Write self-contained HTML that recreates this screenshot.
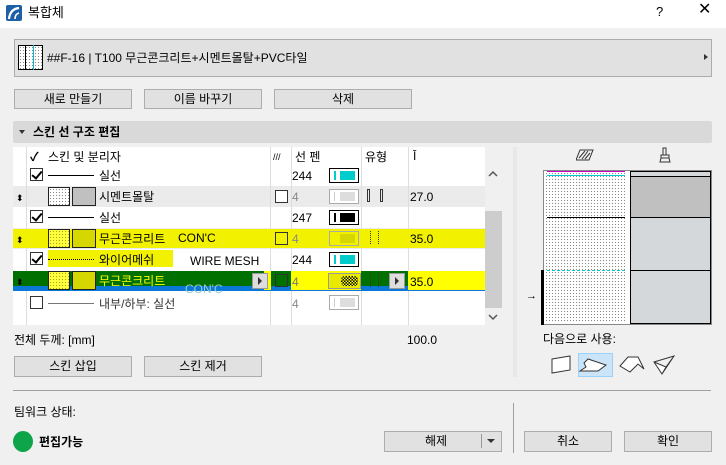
<!DOCTYPE html>
<html><head><meta charset="utf-8"><style>
*{margin:0;padding:0;box-sizing:border-box}
body{width:726px;height:465px;background:#f0f0f0;font-family:"Liberation Sans","Noto Sans CJK KR",sans-serif;font-size:12px;color:#000;position:relative;overflow:hidden}
.a{position:absolute}
.btn{position:absolute;background:#e1e1e1;border:1px solid #adadad;text-align:center;line-height:18px;font-size:12px}
.t{position:absolute;white-space:nowrap;font-size:12px;line-height:14px}
.cb{position:absolute;width:13px;height:13px;border:1px solid #333;background:#fff}
.ck:after{content:"";position:absolute;left:3px;top:0px;width:4px;height:8px;border:solid #000;border-width:0 2px 2px 0;transform:rotate(40deg)}
.dot{background-color:#fff;background-image:radial-gradient(#888 0.6px,transparent 0.8px);background-size:3px 3px}
.dy{background-color:#ffff40;background-image:radial-gradient(#aa0 0.6px,transparent 0.8px);background-size:3px 3px}
.g{color:#888}
</style></head><body>
<!-- title -->
<div class="a" style="left:0;top:0;width:726px;height:28px;background:#fff"></div>
<svg class="a" style="left:6px;top:5px" width="16" height="16"><rect width="16" height="16" rx="2" fill="#1f5fa8"/><path d="M3 14 Q4 4 13 3" stroke="#fff" stroke-width="2.2" fill="none"/><path d="M9 14 Q9 9 13 8" stroke="#fff" stroke-width="1.6" fill="none"/></svg>
<div class="t" style="left:28px;top:6px;font-size:13px">복합체</div>
<div class="t" style="left:656px;top:5px;font-size:13px">?</div>
<div class="t" style="left:698px;top:3px;font-size:16px">✕</div>
<!-- combo -->
<div class="a" style="left:14px;top:39px;width:698px;height:38px;background:#e1e1e1;border:1px solid #adadad"></div>
<div class="a dot" style="left:18px;top:45px;width:25px;height:25px;border:1px solid #000"></div>
<div class="a" style="left:25px;top:45px;width:1px;height:25px;background:#000"></div>
<div class="a" style="left:33px;top:45px;width:1px;height:25px;background:#00bcd4"></div>
<div class="t" style="left:47px;top:51px">##F-16 | T100 무근콘크리트+시멘트몰탈+PVC타일</div>
<div class="a" style="left:704px;top:54px;border-left:4px solid #333;border-top:3px solid transparent;border-bottom:3px solid transparent"></div>
<div class="btn" style="left:14px;top:89px;width:118px;height:20px">새로 만들기</div>
<div class="btn" style="left:144px;top:89px;width:118px;height:20px">이름 바꾸기</div>
<div class="btn" style="left:274px;top:89px;width:138px;height:20px">삭제</div>
<div class="a" style="left:13px;top:121px;width:699px;height:22px;background:#d9d9d9;border-radius:2px"></div>
<div class="a" style="left:19px;top:130px;border-top:4px solid #333;border-left:3px solid transparent;border-right:3px solid transparent"></div>
<div class="t" style="left:33px;top:125px;font-weight:bold">스킨 선 구조 편집</div>
<!-- table -->
<div class="a" style="left:13px;top:147px;width:472px;height:178px;background:#fff"></div>
<div class="a" style="left:13px;top:186px;width:472px;height:21px;background:#ebebeb"></div>
<div class="a" style="left:13px;top:228px;width:472px;height:21px;background:#ebebeb"></div>
<div class="a" style="left:26px;top:147px;width:1px;height:178px;background:#ddd"></div>
<div class="a" style="left:270px;top:147px;width:1px;height:178px;background:#ddd"></div>
<div class="a" style="left:291px;top:147px;width:1px;height:178px;background:#ddd"></div>
<div class="a" style="left:361px;top:147px;width:1px;height:178px;background:#ddd"></div>
<div class="a" style="left:408px;top:147px;width:1px;height:178px;background:#ddd"></div>
<div class="a" style="left:485px;top:147px;width:17px;height:178px;background:#f0f0f0"></div>
<div class="a" style="left:485px;top:211px;width:17px;height:97px;background:#cdcdcd"></div>
<svg class="a" style="left:487px;top:170px" width="12" height="8"><path d="M2 6l4-4 4 4" stroke="#555" stroke-width="1.5" fill="none"/></svg>
<svg class="a" style="left:487px;top:313px" width="12" height="8"><path d="M2 2l4 4 4-4" stroke="#555" stroke-width="1.5" fill="none"/></svg>
<!-- header -->
<div class="t" style="left:30px;top:150px;font-weight:bold">✓</div>
<div class="t" style="left:48px;top:150px">스킨 및 분리자</div>
<div class="t" style="left:273px;top:150px;font-size:9px">///</div>
<div class="t" style="left:295px;top:150px">선 펜</div>
<div class="t" style="left:365px;top:150px">유형</div>
<div class="t" style="left:413px;top:149px">Ī</div>
<!-- rows -->
<div class="cb ck" style="left:30px;top:168px"></div>
<div class="a" style="left:48px;top:175px;width:46px;height:1px;background:#000"></div>
<div class="t" style="left:99px;top:169px">실선</div>
<div class="t" style="left:292px;top:169px">244</div>
<div class="a" style="left:329px;top:168px;width:30px;height:15px;border:1.5px solid #000;background:#fff"><div class="a" style="left:4px;top:2px;width:1.5px;height:9px;background:#0cc"></div><div class="a" style="left:10px;top:2px;width:15px;height:9px;background:#0cc"></div></div>

<div class="t" style="left:16px;top:191px;font-size:9px">⬍</div>
<div class="a dot" style="left:48px;top:187px;width:22px;height:19px;border:1px solid #222"></div>
<div class="a" style="left:72px;top:187px;width:24px;height:19px;border:1px solid #222;background:#c0c0c0"></div>
<div class="t" style="left:99px;top:190px">시멘트몰탈</div>
<div class="cb" style="left:275px;top:190px"></div>
<div class="t g" style="left:292px;top:190px">4</div>
<div class="a" style="left:329px;top:189px;width:30px;height:15px;border:1px solid #aaa;background:#fff"><div class="a" style="left:4px;top:2px;width:1px;height:9px;background:#ccc"></div><div class="a" style="left:10px;top:2px;width:15px;height:9px;background:#ddd"></div></div>
<div class="a" style="left:367px;top:189px;width:3px;height:13px;border:1px solid #333"></div>
<div class="a" style="left:380px;top:189px;width:3px;height:13px;border:1px solid #333"></div>
<div class="t" style="left:410px;top:190px">27.0</div>

<div class="cb ck" style="left:30px;top:210px"></div>
<div class="a" style="left:48px;top:217px;width:46px;height:1px;background:#000"></div>
<div class="t" style="left:99px;top:211px">실선</div>
<div class="t" style="left:292px;top:211px">247</div>
<div class="a" style="left:329px;top:210px;width:30px;height:15px;border:1.5px solid #000;background:#fff"><div class="a" style="left:4px;top:2px;width:2px;height:9px;background:#000"></div><div class="a" style="left:10px;top:2px;width:15px;height:9px;background:#000"></div></div>

<!-- yellow highlight row -->
<div class="a" style="left:13px;top:229px;width:472px;height:19px;background:#f2f200"></div>
<div class="t" style="left:16px;top:233px;font-size:9px">⬍</div>
<div class="a dy" style="left:48px;top:229px;width:22px;height:19px;border:1px solid #222"></div>
<div class="a" style="left:72px;top:229px;width:24px;height:19px;border:1px solid #222;background:#d6d600"></div>
<div class="t" style="left:99px;top:232px">무근콘크리트</div>
<div class="t" style="left:178px;top:231px;font-size:12px">CON'C</div>
<div class="cb" style="left:275px;top:232px;background:transparent"></div>
<div class="t g" style="left:292px;top:232px">4</div>
<div class="a" style="left:329px;top:231px;width:30px;height:15px;border:1px solid #aaa"><div class="a" style="left:10px;top:2px;width:15px;height:9px;background:#d6d600"></div></div>
<div class="a" style="left:370px;top:231px;width:1px;height:13px;border-left:1px dotted #333"></div>
<div class="a" style="left:378px;top:231px;width:1px;height:13px;border-left:1px dotted #333"></div>
<div class="t" style="left:410px;top:232px">35.0</div>

<div class="cb ck" style="left:30px;top:252px"></div>
<div class="a" style="left:48px;top:250px;width:125px;height:17px;background:#f2f200"></div>
<div class="a" style="left:48px;top:259px;width:46px;height:1px;border-top:1px dotted #000"></div>
<div class="t" style="left:99px;top:253px">와이어메쉬</div>
<div class="t" style="left:190px;top:254px;font-size:12px">WIRE  MESH</div>
<div class="t" style="left:292px;top:253px">244</div>
<div class="a" style="left:329px;top:252px;width:30px;height:15px;border:1.5px solid #000;background:#fff"><div class="a" style="left:4px;top:2px;width:1.5px;height:9px;background:#0cc"></div><div class="a" style="left:10px;top:2px;width:15px;height:9px;background:#0cc"></div></div>

<!-- selected row -->
<div class="a" style="left:13px;top:271px;width:472px;height:20px;background:#007000"></div>
<div class="a" style="left:13px;top:286px;width:472px;height:5px;background:#0a78d7"></div>
<div class="a" style="left:264px;top:271px;width:221px;height:19px;background:#ffff00"></div>
<div class="a" style="left:271px;top:271px;width:20px;height:20px;background:#007000"></div>
<div class="a" style="left:271px;top:286px;width:20px;height:5px;background:#0a78d7"></div>
<div class="a" style="left:361px;top:271px;width:47px;height:20px;background:#007000"></div>
<div class="a" style="left:361px;top:286px;width:47px;height:5px;background:#0a78d7"></div>
<div class="t" style="left:16px;top:275px;font-size:9px">⬍</div>
<div class="a dy" style="left:48px;top:271px;width:22px;height:19px;border:1px solid #222"></div>
<div class="a" style="left:72px;top:271px;width:24px;height:19px;border:1px solid #222;background:#d6d600"></div>
<div class="t" style="left:99px;top:274px;color:#ff0">무근콘크리트</div>
<div class="t" style="left:185px;top:282px;font-size:12px;color:#9cc">CON'C</div>
<div class="a" style="left:252px;top:273px;width:16px;height:16px;background:#ddd;border:1px solid #999"></div>
<div class="a" style="left:258px;top:277px;border-left:4px solid #333;border-top:4px solid transparent;border-bottom:4px solid transparent"></div>
<div class="cb" style="left:275px;top:274px;background:transparent"></div>
<div class="t" style="left:292px;top:275px;color:#777">4</div>
<div class="a" style="left:328px;top:273px;width:33px;height:16px;background:#e8e800;border:1px solid #999"><div class="a" style="left:12px;top:2px;width:17px;height:10px;background:repeating-conic-gradient(#000 0 25%,#ff0 0 50%) 0 0/3px 3px;border-radius:4px"></div></div>
<div class="a" style="left:370px;top:273px;width:1px;height:14px;border-left:1px dotted #333"></div>
<div class="a" style="left:378px;top:273px;width:1px;height:14px;border-left:1px dotted #333"></div>
<div class="a" style="left:389px;top:273px;width:16px;height:16px;background:#ddd;border:1px solid #999"></div>
<div class="a" style="left:395px;top:277px;border-left:4px solid #333;border-top:4px solid transparent;border-bottom:4px solid transparent"></div>
<div class="t" style="left:410px;top:275px">35.0</div>

<div class="cb" style="left:30px;top:296px"></div>
<div class="a" style="left:48px;top:303px;width:46px;height:1px;background:#777"></div>
<div class="t" style="left:99px;top:297px;color:#333">내부/하부: 실선</div>
<div class="t g" style="left:292px;top:297px">4</div>
<div class="a" style="left:329px;top:295px;width:30px;height:15px;border:1px solid #aaa;background:#fff"><div class="a" style="left:4px;top:2px;width:1px;height:9px;background:#ccc"></div><div class="a" style="left:10px;top:2px;width:15px;height:9px;background:#ddd"></div></div>

<!-- right panel -->
<div class="a" style="left:513px;top:147px;width:4px;height:230px;background:#e8e8e8"></div>
<svg class="a" style="left:576px;top:149px" width="18" height="12"><path d="M4 1h13l-4 10H0z" fill="none" stroke="#333"/><path d="M3 9l6-7M6 10l6-8M9 10l5-6" stroke="#333"/></svg>
<svg class="a" style="left:659px;top:147px" width="12" height="16"><rect x="4" y="1" width="3" height="7" fill="none" stroke="#333"/><path d="M2 8h8v3H2zM2 11l-1 4h10l-1-4" fill="none" stroke="#333"/></svg>
<div class="a" style="left:543px;top:170px;width:169px;height:155px;background:#fff;border:1px solid #888"></div>
<div class="a dot" style="left:545px;top:172px;width:80px;height:151px"></div>
<div class="a" style="left:547px;top:171px;width:78px;height:1px;background:#c0c"></div>
<div class="a" style="left:547px;top:175px;width:78px;height:1px;background:#0cc"></div>
<div class="a" style="left:547px;top:217px;width:78px;height:1px;background:#000"></div>
<div class="a" style="left:547px;top:270px;width:78px;height:1px;border-top:1px dashed #0cc"></div>
<div class="a" style="left:630px;top:171px;width:81px;height:153px;border:1px solid #000;background:#d4d8db"></div>
<div class="a" style="left:631px;top:176px;width:79px;height:41px;background:#c0c0c0;border-top:1px solid #000"></div>
<div class="a" style="left:631px;top:217px;width:79px;height:1px;background:#000"></div>
<div class="a" style="left:631px;top:270px;width:79px;height:1px;background:#000"></div>
<div class="a" style="left:541px;top:270px;width:3px;height:55px;background:#000"></div>
<div class="t" style="left:526px;top:289px;font-size:11px">→</div>
<div class="t" style="left:543px;top:332px">다음으로 사용:</div>
<div class="a" style="left:578px;top:353px;width:35px;height:24px;background:#cce4f7;border:1px solid #99d1ff"></div>
<svg class="a" style="left:548px;top:354px" width="130" height="22"><path d="M4 5l18-3v14L4 19z" fill="#fff" stroke="#333"/><path d="M36 9l4-4 18 6-8 6-18 0 6-4z" fill="#fff" stroke="#333"/><path d="M72 12l8-9h10l6 12-6-5-8 8z" fill="#fff" stroke="#333"/><path d="M106 8l20-6-12 18zM106 8l12 5 8-11M118 13l-4 7" fill="#fff" stroke="#333"/></svg>
<!-- bottom -->
<div class="t" style="left:14px;top:333px">전체 두께: [mm]</div>
<div class="t" style="left:407px;top:333px">100.0</div>
<div class="btn" style="left:14px;top:356px;width:118px;height:21px">스킨 삽입</div>
<div class="btn" style="left:144px;top:356px;width:118px;height:21px">스킨 제거</div>
<div class="a" style="left:13px;top:390px;width:698px;height:1px;background:#a0a0a0"></div>
<div class="a" style="left:513px;top:403px;width:1px;height:50px;background:#a0a0a0"></div>
<div class="t" style="left:14px;top:405px">팀워크 상태:</div>
<div class="a" style="left:13px;top:431px;width:20px;height:21px;border-radius:50%;background:#0ea44a"></div>
<div class="t" style="left:39px;top:435px;font-weight:bold">편집가능</div>
<div class="btn" style="left:384px;top:431px;width:118px;height:21px;text-align:left;padding-left:40px">해제</div>
<div class="a" style="left:481px;top:434px;width:1px;height:14px;background:#999"></div>
<div class="a" style="left:487px;top:439px;border-top:4px solid #333;border-left:4px solid transparent;border-right:4px solid transparent"></div>
<div class="btn" style="left:524px;top:431px;width:88px;height:21px">취소</div>
<div class="btn" style="left:624px;top:431px;width:88px;height:21px">확인</div>
</body></html>
